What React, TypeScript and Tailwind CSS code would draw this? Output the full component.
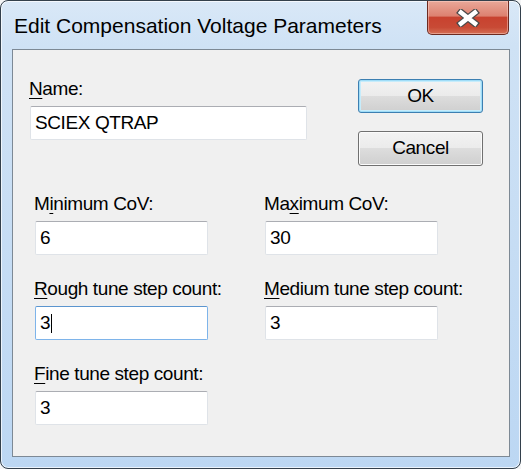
import React from "react"

const font = "font-['Liberation_Sans',Arial,sans-serif]"

function Label({ pre = "", u, post }: { pre?: string; u: string; post: string }) {
    return (
        <div className="leading-[22px] h-[22px] whitespace-nowrap -ml-px">
            {pre}
            <span className="underline underline-offset-[3px] decoration-1">{u}</span>
            {post}
        </div>
    )
}

function TextBox({
    value,
    width,
    focused = false,
}: {
    value: string
    width: string
    focused?: boolean
}) {
    return (
        <div
            className={
                "mt-[6px] h-[34px] rounded-[2px] bg-white border flex items-center pl-[4px] " +
                width +
                (focused
                    ? " border-[#7eb4ea] border-t-[#5b95cf]"
                    : " border-[#dfe3e8] border-t-[#abadb3]")
            }
        >
            <span>{value}</span>
            {focused && <span className="w-px h-[19px] bg-black ml-px" />}
        </div>
    )
}

function Field({
    pre,
    u,
    post,
    value,
    focused,
}: {
    pre?: string
    u: string
    post: string
    value: string
    focused?: boolean
}) {
    return (
        <div className="flex flex-col">
            <Label pre={pre} u={u} post={post} />
            <TextBox value={value} width="w-[173px]" focused={focused} />
        </div>
    )
}

function CloseButton() {
    return (
        <div className="ml-auto mr-[11px] w-[82px] h-[34px] rounded-b-[5px] border border-t-0 border-[#6d2a20] bg-[linear-gradient(180deg,#e9a899_0%,#dd8170_45%,#c8422f_50%,#c84a35_80%,#d56f55_100%)] shadow-[inset_0_0_0_1px_rgba(255,220,210,0.45)] flex items-center justify-center">
            <svg width="24" height="18" viewBox="0 0 24 18">
                <path d="M5 3.5 L19 14.5 M19 3.5 L5 14.5" stroke="#4a4a4a" strokeWidth="7" strokeLinecap="square" />
                <path d="M5 3.5 L19 14.5 M19 3.5 L5 14.5" stroke="#ffffff" strokeWidth="4.5" strokeLinecap="square" />
            </svg>
        </div>
    )
}

function Button({ label, primary = false, h }: { label: string; primary?: boolean; h: string }) {
    return (
        <div
            className={
                "w-[125px] rounded-[3px] border flex items-center justify-center bg-[linear-gradient(180deg,#f3f3f3_0%,#ebebeb_50%,#dddddd_50%,#cfcfcf_100%)] " +
                h +
                (primary
                    ? " border-[#3c7fb1] shadow-[inset_0_0_0_1px_#9fdcf7,inset_0_0_0_2px_#c6ecfb]"
                    : " border-[#707070] shadow-[inset_0_0_0_1px_#fbfbfb]")
            }
        >
            {label}
        </div>
    )
}

export default function App() {
    return (
        <div className={"w-[521px] h-[469px] bg-[#f4f5f6] text-black " + font}>
            <div className="w-[521px] h-[469px] rounded-[8px] border border-[#33404c] bg-[linear-gradient(180deg,#d9e8f7_0%,#cfe2f5_45px,#bcd7f3_100%)] shadow-[inset_0_0_0_1px_rgba(255,255,255,0.7)] flex flex-col overflow-hidden">
                <div className="h-[48px] flex items-start">
                    <div className="pl-[13px] pt-[13px] text-[21px] leading-[24px] text-black">
                        Edit Compensation Voltage Parameters
                    </div>
                    <CloseButton />
                </div>
                <div className="ml-[11px] mr-[10px] h-[408px] border border-[#7d8995] bg-[#f0f0f0] text-[19px] tracking-[-0.4px]">
                    <div className="flex items-start pt-[28px] pl-[17px]">
                        <div className="flex flex-col w-[277px]">
                            <Label u="N" post="ame:" />
                            <TextBox value="SCIEX QTRAP" width="w-[277px]" />
                        </div>
                        <div className="ml-[51px] mt-[1px] mb-[-26px] flex flex-col gap-[18px]">
                            <Button label="OK" primary h="h-[34px]" />
                            <Button label="Cancel" h="h-[35px]" />
                        </div>
                    </div>
                    <div className="mt-[53px] pl-[22px] grid grid-cols-[173px_173px] gap-x-[57px] gap-y-[23px]">
                        <Field pre="M" u="i" post="nimum CoV:" value="6" />
                        <Field pre="Ma" u="x" post="imum CoV:" value="30" />
                        <Field u="R" post="ough tune step count:" value="3" focused />
                        <Field u="M" post="edium tune step count:" value="3" />
                        <Field u="F" post="ine tune step count:" value="3" />
                    </div>
                </div>
            </div>
        </div>
    )
}
